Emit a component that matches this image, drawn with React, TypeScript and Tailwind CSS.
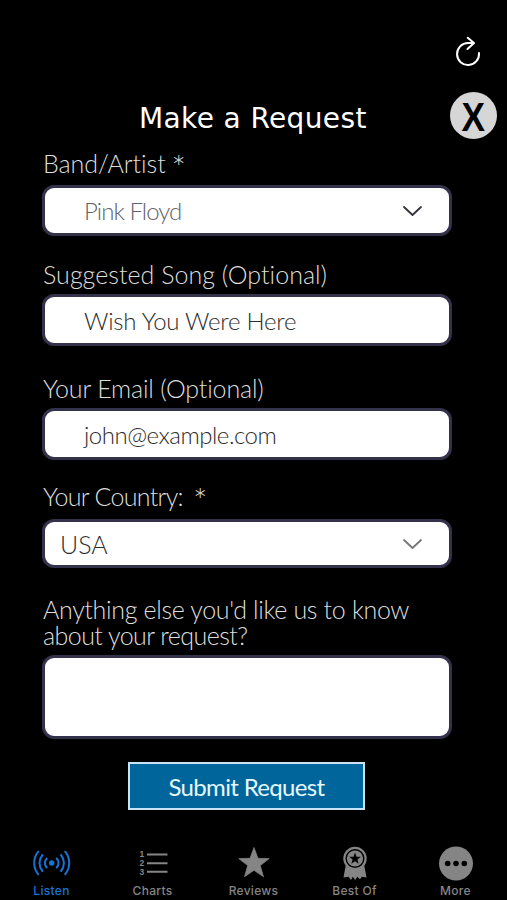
import React from 'react';

const chevron = 'M1 1l8.5 8L18 1';

function Label({ className, children }) {
  return (
    <label className={`block whitespace-nowrap pl-px text-[25px] leading-[25px] font-light text-[#dedede] ${className}`}>
      {children}
    </label>
  );
}

function Required({ className }) {
  return <span className={`inline-block h-[20px] align-top text-[34px] leading-[31px] ${className}`}>*</span>;
}

function Field({ className, children }) {
  return (
    <div className={`flex items-center justify-between whitespace-nowrap rounded-[12px] border-3 border-[#34324a] bg-white pr-[27px] leading-[25px] font-light ${className}`}>
      {children}
    </div>
  );
}

function Chevron({ className }) {
  return (
    <svg className={className} width="19" height="11" viewBox="0 0 19 11" fill="none" stroke="currentColor" strokeWidth="1.8" strokeLinecap="round" strokeLinejoin="round">
      <path d={chevron} />
    </svg>
  );
}

function Tab({ label, active = false, children }) {
  return (
    <div className={`flex w-[101px] flex-col items-center gap-[2px] ${active ? 'text-[#1673d6]' : 'text-[#858585]'}`}>
      <svg width="44" height="38" viewBox="0 0 44 38" fill="none" stroke="currentColor">
        {children}
      </svg>
      <span className="whitespace-nowrap font-['Inter'] text-[12px] leading-[14px] font-medium tracking-[0.3px]">{label}</span>
    </div>
  );
}

export default function App() {
  return (
    <div className="flex h-[900px] w-[507px] flex-col overflow-hidden bg-black font-['Lato',sans-serif]">
      <div className="flex h-[91px] justify-end pt-[35px] pr-[24px]">
        <svg width="30" height="34" viewBox="0 0 30 34" fill="none" stroke="#fff" strokeWidth="2" strokeLinecap="round" strokeLinejoin="round">
          <path d="M26 18A11 11 0 1 1 15 8h5.5" />
          <path d="M14.7 2.8l6.3 5.2-6.5 6" />
        </svg>
      </div>

      <div className="flex h-[49px] items-center justify-between pr-[10px] pl-[139px]">
        <h1 className="whitespace-nowrap pt-[6px] font-['DejaVu_Sans'] text-[28px] leading-[34px] tracking-[0.38px] text-white">Make a Request</h1>
        <button className="flex h-[47px] w-[47px] items-center justify-center rounded-full bg-[#d6d6d6]">
          <span className="scale-x-[0.88] pt-[3px] font-['Liberation_Sans'] text-[40px] leading-[40px] font-bold text-black">X</span>
        </button>
      </div>

      <form className="flex h-[671px] w-[410px] flex-col ml-[42px]">
        <Label className="mt-[11px] h-[25px] tracking-[-0.05px]">
          Band/Artist <Required className="-ml-px" />
        </Label>
        <Field className="mt-[9px] h-[51px] pl-[39px] text-[24px] tracking-[-0.95px] text-[#62626a]">
          <span>Pink Floyd</span>
          <Chevron className="mt-[2px] text-[#33333b]" />
        </Field>

        <Label className="mt-[26px] tracking-[0.03px]">Suggested Song (Optional)</Label>
        <Field className="mt-[7px] h-[52px] pl-[39px] text-[24px] tracking-[-0.22px] text-[#2c2c2c]">Wish You Were Here</Field>

        <Label className="mt-[30px] tracking-[-0.17px]">Your Email (Optional)</Label>
        <Field className="mt-[7px] h-[52px] pl-[39px] text-[24px] tracking-[-0.48px] text-[#2c2c2c]">john@example.com</Field>

        <Label className="mt-[24px] h-[25px] tracking-[-0.7px]">
          Your Country: <Required className="ml-[4px]" />
        </Label>
        <Field className="mt-[10px] h-[49px] pl-[15px] text-[25px] text-[#2c2c2c]">
          <span className="pt-[2px]">USA</span>
          <Chevron className="mt-[2px] text-[#77777b]" />
        </Field>

        <Label className="mt-[29px] tracking-[-0.33px]">
          Anything else you'd like us to know
          <span className="block pt-px tracking-[-0.55px]">about your request?</span>
        </Label>
        <Field className="mt-[7px] h-[84px]">{null}</Field>

        <button className="mt-[23px] ml-[86px] h-[48px] w-[237px] whitespace-nowrap border-2 border-[#c5e3f4] bg-[#00659b] text-[24px] leading-[25px] tracking-[-0.66px] text-[#e6f7ff]">
          Submit Request
        </button>
      </form>

      <nav className="flex pt-[33px] pl-px">
        <Tab label="Listen" active>
          <circle cx="21.7" cy="19" r="2.7" fill="currentColor" stroke="none" />
          <g strokeWidth="2" strokeLinecap="round">
            <path d="M16.7 14.5a6.5 6.5 0 0 0 0 9M26.7 14.5a6.5 6.5 0 0 1 0 9" />
            <path d="M12.4 11a12.5 12.5 0 0 0 0 16M31 11a12.5 12.5 0 0 1 0 16" />
            <path d="M8.2 7.7a18 18 0 0 0 0 22.6M35.2 7.7a18 18 0 0 1 0 22.6" />
          </g>
        </Tab>
        <Tab label="Charts">
          <path d="M16 10.5h20.500M16 19.300h20.500M16 27.700h20.500" strokeWidth="2" />
          <g className="font-['Liberation_Sans'] text-[8.5px] font-bold" fill="currentColor" stroke="none">
            <text x="8.500" y="13.200">1</text>
            <text x="8.500" y="22.300">2</text>
            <text x="8.500" y="31">3</text>
          </g>
        </Tab>
        <Tab label="Reviews">
          <path d="M22 3.5l4 10.8 11.2.3-8.9 7 3.2 11.2-9.5-6.5-9.5 6.5 3.2-11.2-8.9-7 11.2-.3z" fill="currentColor" strokeLinejoin="round" strokeWidth="0.7" />
        </Tab>
        <Tab label="Best Of">
          <path d="M13 20l-2.5 13.5 5-.7 2.5 3.2 1.8-3.2 2.4 3.2 2-3.2 2.8 2.4 1.8-2.4 4.7.7L31 20z" fill="currentColor" stroke="none" />
          <circle cx="22" cy="14.5" r="11.7" fill="currentColor" stroke="none" />
          <circle cx="22" cy="14.5" r="8.8" stroke="#000" strokeWidth="1.4" />
          <path d="M22 8.4l1.5 4.3h4.4l-3.5 2.8 1.3 4.3-3.7-2.6-3.7 2.6 1.3-4.3-3.5-2.8h4.4z" fill="#000" stroke="none" />
        </Tab>
        <Tab label="More">
          <circle cx="22" cy="19.5" r="17" fill="currentColor" stroke="none" />
          <g fill="#000" stroke="none">
            <circle cx="13.7" cy="19.5" r="2.8" />
            <circle cx="22" cy="19.5" r="2.8" />
            <circle cx="30.3" cy="19.5" r="2.8" />
          </g>
        </Tab>
      </nav>
    </div>
  );
}
